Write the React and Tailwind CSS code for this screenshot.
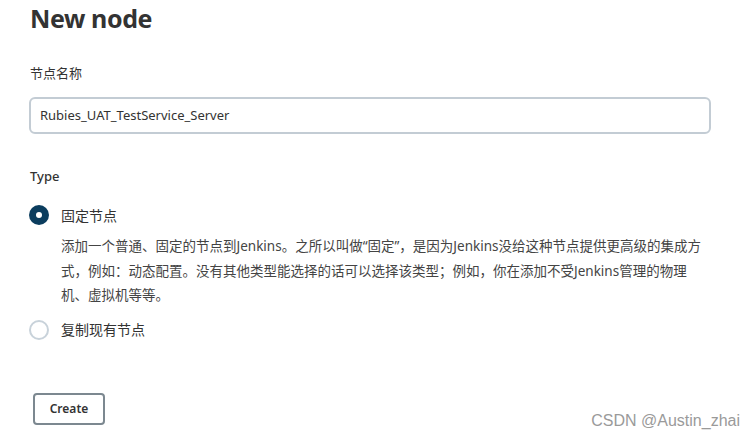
export default function App() {
  const cjk = { fontFamily: '"Segoe UI", "Noto Sans", "Noto Sans CJK SC", sans-serif' };
  return (
    <div className="relative w-[753px] h-[439px] bg-white overflow-hidden text-[#333]" style={cjk}>
      <div className="pl-[30px] pr-[42px]">
        <h1 className="text-[25px] font-bold leading-[32px] pt-[2px] tracking-[-0.4px] text-[#333]">New node</h1>

        <div className="mt-[29px] text-[13px] leading-[20px]">节点名称</div>
        <div className="mt-[14px] -ml-px h-[37px] rounded-[6px] border-2 border-[#c3ccd4] flex items-center pl-[9px] text-[13px]">
          Rubies_UAT_TestService_Server
        </div>

        <div className="mt-[32px] text-[13px] leading-[20px] font-medium">Type</div>

        <div className="mt-[19px] flex items-center h-[20px]">
          <span className="w-[20px] h-[20px] -ml-[1px] rounded-full bg-[#0b3d5e] flex items-center justify-center">
            <span className="w-[6px] h-[6px] rounded-full bg-white" />
          </span>
          <span className="ml-[12px] text-[14px]">固定节点</span>
        </div>

        <div className="pl-[31px] mt-[9px] text-[13.5px] leading-[24.5px] text-[#444]">
          <div className="whitespace-nowrap">添加一个普通、固定的节点到Jenkins。之所以叫做“固定”，是因为Jenkins没给这种节点提供更高级的集成方</div>
          <div className="whitespace-nowrap">式，例如：动态配置。没有其他类型能选择的话可以选择该类型；例如，你在添加不受Jenkins管理的物理</div>
          <div className="whitespace-nowrap">机、虚拟机等等。</div>
        </div>

        <div className="mt-[12px] flex items-center h-[20px]">
          <span className="w-[20px] h-[20px] -ml-[1px] rounded-full border-2 border-[#c8d2da]" />
          <span className="ml-[12px] text-[14px]">复制现有节点</span>
        </div>

        <button className="mt-[53px] ml-[3px] w-[72px] h-[32px] rounded-[4px] border-2 border-[#7c8890] text-[12px] font-semibold text-[#333] bg-white">
          Create
        </button>
      </div>

      <div
        className="absolute right-[13px] bottom-[8px] text-[16px] leading-[20px] text-[#9a9a9a]"
        style={{ fontFamily: '"Liberation Sans", sans-serif' }}
      >
        CSDN @Austin_zhai
      </div>
    </div>
  );
}
